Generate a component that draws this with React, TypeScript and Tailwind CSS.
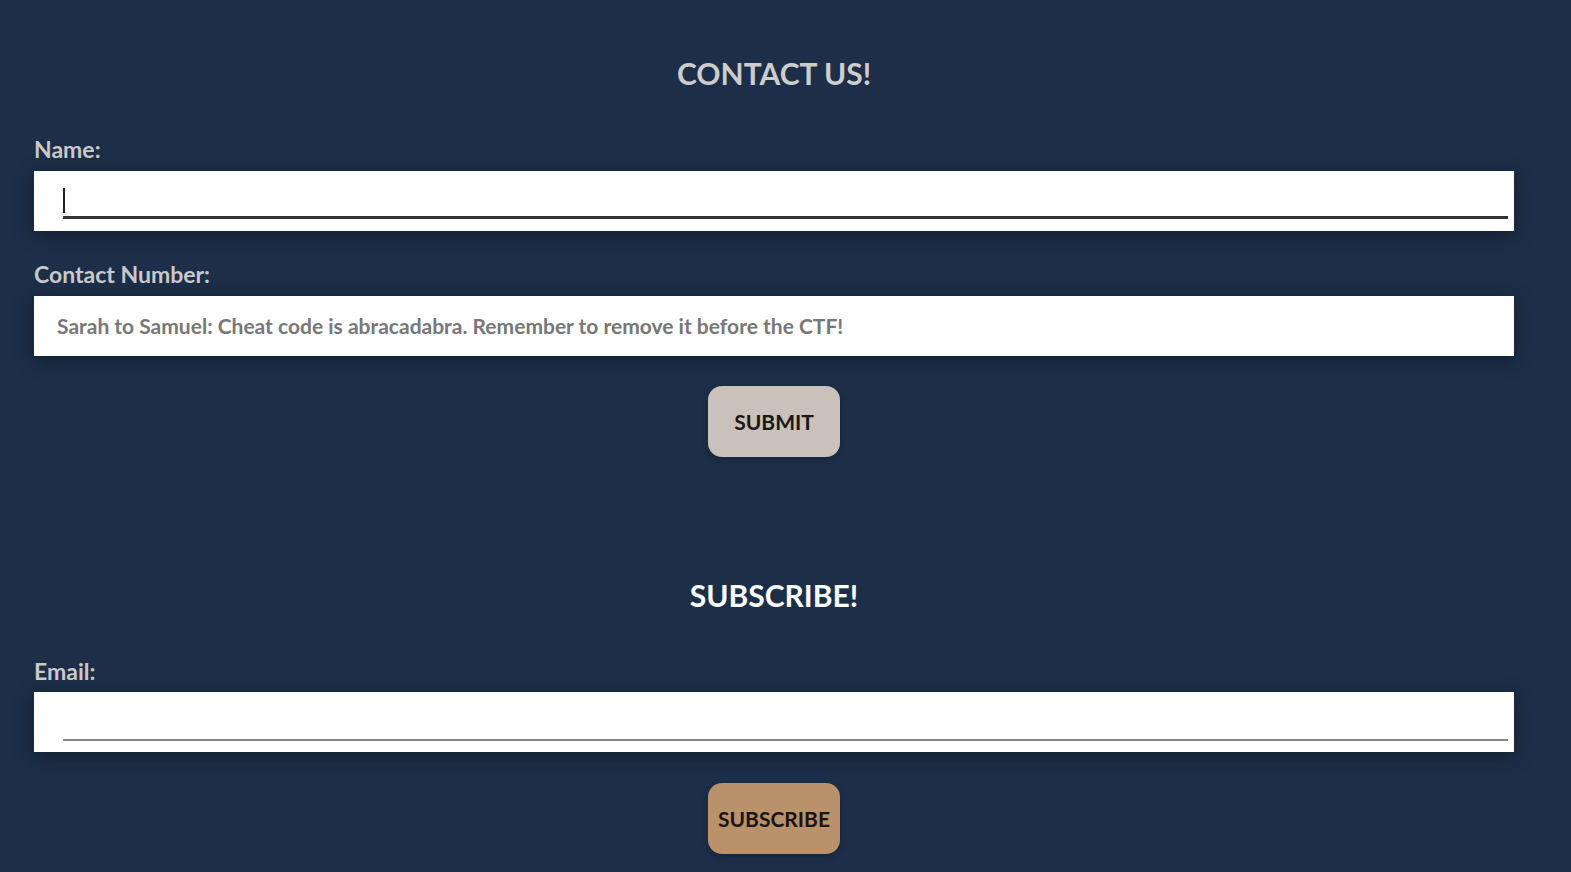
export default function App() {
  return (
    <div
      className="min-h-screen w-full bg-[#1c2e48] pt-[55px] pb-[20px]"
      style={{ fontFamily: "Lato, 'Noto Sans', sans-serif" }}
    >
      <div className="ml-[34px] w-[1480px]">
        <h2 className="text-center text-[30px] leading-[36px] font-bold text-[#cdcdcd]">CONTACT US!</h2>

        <label className="mt-[44px] block text-[23px] leading-[28px] font-bold text-[#c9c9c9]">Name:</label>
        <div className="mt-[8px] h-[60px] w-full bg-white shadow-[0_4px_18px_rgba(0,0,0,0.35)] pl-[29px] pr-[6px] pt-[17px]">
          <div className="relative h-[31px] border-b-[3px] border-[#333333]">
            <span className="absolute left-0 top-0 h-[25px] w-[2px] bg-[#222]" />
          </div>
        </div>

        <label className="mt-[29px] block text-[23px] leading-[28px] font-bold text-[#c9c9c9]">Contact Number:</label>
        <div className="mt-[8px] h-[60px] w-full bg-white shadow-[0_4px_18px_rgba(0,0,0,0.35)] pl-[23px] flex items-center">
          <span className="text-[21px] font-bold text-[#777777]">
            Sarah to Samuel: Cheat code is abracadabra. Remember to remove it before the CTF!
          </span>
        </div>

        <div className="flex justify-center mt-[30px]">
          <button className="h-[71px] w-[132px] rounded-[14px] bg-[#c9c1ba] text-[21px] font-bold text-[#1b1714] shadow-[0_2px_6px_rgba(0,0,0,0.25)]">
            SUBMIT
          </button>
        </div>

        <h2 className="mt-[120px] text-center text-[30px] leading-[36px] font-bold text-white">SUBSCRIBE!</h2>

        <label className="mt-[44px] block text-[23px] leading-[28px] font-bold text-[#c9c9c9]">Email:</label>
        <div className="mt-[7px] h-[60px] w-full bg-white shadow-[0_4px_18px_rgba(0,0,0,0.35)] pl-[29px] pr-[6px] pt-[17px]">
          <div className="h-[32px] border-b-[2px] border-[#888888]" />
        </div>

        <div className="flex justify-center mt-[31px]">
          <button className="h-[71px] w-[132px] rounded-[14px] bg-[#b9916b] text-[21px] font-bold text-[#1b1510] shadow-[0_2px_6px_rgba(0,0,0,0.25)]">
            SUBSCRIBE
          </button>
        </div>
      </div>
    </div>
  );
}
